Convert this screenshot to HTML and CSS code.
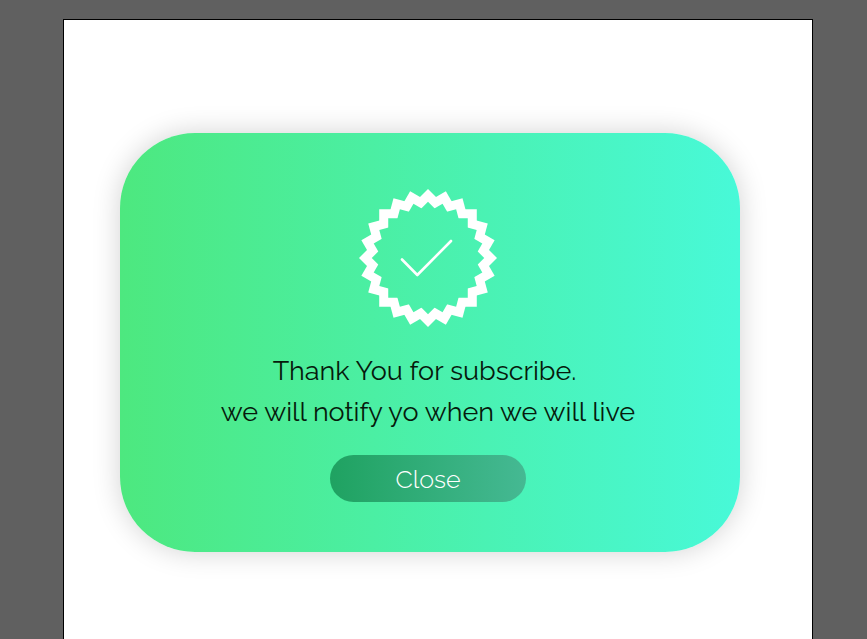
FILE: index.html
```html
<!DOCTYPE html>
<html lang="en">
<head>
<meta charset="utf-8">
<meta name="viewport" content="width=device-width, initial-scale=1">
<title>Subscription confirmed</title>
<link rel="stylesheet" href="styles.css">
</head>
<body>
<main class="artboard">
  <section class="card">
    <svg class="badge" viewBox="-69 -69 138 138" aria-hidden="true">
      <defs>
        <path id="square" d="M0-69 69 0 0 69-69 0z"/>
        <g id="star">
          <use href="#square"/>
          <use href="#square" transform="rotate(15)"/>
          <use href="#square" transform="rotate(30)"/>
          <use href="#square" transform="rotate(45)"/>
          <use href="#square" transform="rotate(60)"/>
          <use href="#square" transform="rotate(75)"/>
        </g>
        <mask id="ring" maskUnits="userSpaceOnUse" x="-70" y="-70" width="140" height="140">
          <rect x="-70" y="-70" width="140" height="140" fill="#fff"/>
          <use href="#star" fill="#000" transform="scale(.815)"/>
        </mask>
      </defs>
      <g mask="url(#ring)"><use href="#star" fill="#fff"/></g>
      <path d="M-26 1.5-10.7 17 23-17" fill="none" stroke="#fff" stroke-width="2.6" stroke-linecap="round" stroke-linejoin="round"/>
    </svg>
    <p class="message">Thank You for subscribe.&nbsp;<br>we will notify yo when we will live</p>
    <button class="close" type="button">Close</button>
  </section>
</main>
</body>
</html>
```
FILE: styles.css
```css
* {
  box-sizing: border-box;
}

body {
  margin: 0;
  min-height: 100vh;
  display: flex;
  padding: 19px 54px 0 63px;
  background: #606060;
  font-family: Raleway, Lato, "Open Sans", sans-serif;
}

.artboard {
  flex: 1;
  padding: 113px 72px 86px 56px;
  background: #fff;
  border: 1px solid #000;
  border-bottom: 0;
}

.card {
  display: flex;
  flex-direction: column;
  align-items: center;
  padding: 56px 4px 50px 0;
  border-radius: 75px;
  background: linear-gradient(90deg, #4de87f, #48f9d8);
  box-shadow: 0 0 28px rgba(0, 0, 0, 0.18);
}

.badge {
  width: 138px;
  height: 138px;
}

.message {
  margin: 23px 0;
  color: #061a0c;
  font-size: 27px;
  line-height: 41px;
  text-align: center;
}

.close {
  width: 196px;
  height: 47px;
  padding: 0;
  border: 0;
  border-radius: 24px;
  background: linear-gradient(90deg, #1fa261, #45b993);
  color: #fff;
  font: inherit;
  font-size: 25px;
  font-weight: 300;
  cursor: pointer;
}
```
